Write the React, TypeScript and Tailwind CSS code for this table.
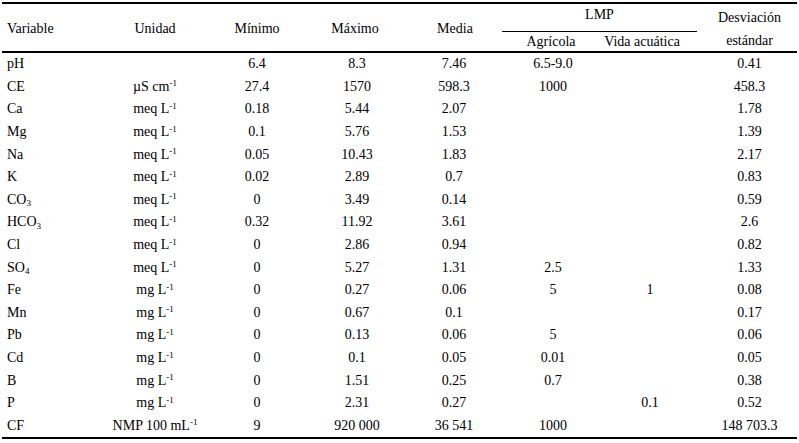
import React from "react";

type Row = {
  variable: React.ReactNode;
  unit: React.ReactNode;
  min: string;
  max: string;
  mean: string;
  agri?: string;
  aqua?: string;
  sd: string;
};

const meq = (
  <>
    meq L<sup className="text-[9px]">-1</sup>
  </>
);
const mg = (
  <>
    mg L<sup className="text-[9px]">-1</sup>
  </>
);

const rows: Row[] = [
  { variable: "pH", unit: "", min: "6.4", max: "8.3", mean: "7.46", agri: "6.5-9.0", sd: "0.41" },
  {
    variable: "CE",
    unit: (
      <>
        µS cm<sup className="text-[9px]">-1</sup>
      </>
    ),
    min: "27.4",
    max: "1570",
    mean: "598.3",
    agri: "1000",
    sd: "458.3",
  },
  { variable: "Ca", unit: meq, min: "0.18", max: "5.44", mean: "2.07", sd: "1.78" },
  { variable: "Mg", unit: meq, min: "0.1", max: "5.76", mean: "1.53", sd: "1.39" },
  { variable: "Na", unit: meq, min: "0.05", max: "10.43", mean: "1.83", sd: "2.17" },
  { variable: "K", unit: meq, min: "0.02", max: "2.89", mean: "0.7", sd: "0.83" },
  {
    variable: (
      <>
        CO<sub className="text-[9px]">3</sub>
      </>
    ),
    unit: meq,
    min: "0",
    max: "3.49",
    mean: "0.14",
    sd: "0.59",
  },
  {
    variable: (
      <>
        HCO<sub className="text-[9px]">3</sub>
      </>
    ),
    unit: meq,
    min: "0.32",
    max: "11.92",
    mean: "3.61",
    sd: "2.6",
  },
  { variable: "Cl", unit: meq, min: "0", max: "2.86", mean: "0.94", sd: "0.82" },
  {
    variable: (
      <>
        SO<sub className="text-[9px]">4</sub>
      </>
    ),
    unit: meq,
    min: "0",
    max: "5.27",
    mean: "1.31",
    agri: "2.5",
    sd: "1.33",
  },
  { variable: "Fe", unit: mg, min: "0", max: "0.27", mean: "0.06", agri: "5", aqua: "1", sd: "0.08" },
  { variable: "Mn", unit: mg, min: "0", max: "0.67", mean: "0.1", sd: "0.17" },
  { variable: "Pb", unit: mg, min: "0", max: "0.13", mean: "0.06", agri: "5", sd: "0.06" },
  { variable: "Cd", unit: mg, min: "0", max: "0.1", mean: "0.05", agri: "0.01", sd: "0.05" },
  { variable: "B", unit: mg, min: "0", max: "1.51", mean: "0.25", agri: "0.7", sd: "0.38" },
  { variable: "P", unit: mg, min: "0", max: "2.31", mean: "0.27", aqua: "0.1", sd: "0.52" },
  {
    variable: "CF",
    unit: (
      <>
        NMP 100 mL<sup className="text-[9px]">-1</sup>
      </>
    ),
    min: "9",
    max: "920 000",
    mean: "36 541",
    agri: "1000",
    sd: "148 703.3",
  },
];

const cols = "grid grid-cols-[108px_90px_114px_86px_108px_90px_104px_95px]";

export default function App() {
  return (
    <div className="w-[799px] h-[443px] bg-white text-black overflow-hidden pt-[2px]">
      <div
        className="ml-[2px] w-[795px] text-[14px] leading-none"
        style={{ fontFamily: '"Liberation Serif", "Times New Roman", serif' }}
      >
        {/* Header */}
        <div className={`${cols} grid-rows-[28px_19px] border-t-2 border-b-2 border-black`}>
          <div className="row-span-2 flex items-center pl-[5px] pt-[3px]">Variable</div>
          <div className="row-span-2 flex items-center justify-center pt-[3px]">Unidad</div>
          <div className="row-span-2 flex items-center justify-center pt-[3px]">Mínimo</div>
          <div className="row-span-2 flex items-center justify-center pt-[3px] pr-[4px]">Máximo</div>
          <div className="row-span-2 flex items-center justify-center pt-[3px] pl-[2px]">Media</div>
          <div className="col-span-2 -ml-[6px] mr-[5px] flex items-end">
            <div className="w-full border-b border-black text-center pb-[9px]">LMP</div>
          </div>
          <div className="row-span-2 col-start-8 row-start-1 flex flex-col items-center justify-center gap-[9px] pt-[3px]">
            <span>Desviación</span>
            <span>estándar</span>
          </div>
          <div className="col-start-6 row-start-2 flex items-center justify-center pr-[4px] pt-[1px]">
            Agrícola
          </div>
          <div className="col-start-7 row-start-2 flex items-center justify-center pr-[16px] pt-[1px]">
            Vida acuática
          </div>
        </div>

        {/* Body */}
        <div className="border-b-2 border-black">
          {rows.map((r, i) => (
            <div key={i} className={`${cols} h-[22.6px] items-center`}>
              <div className="pl-[5px]">{r.variable}</div>
              <div className="text-center">{r.unit}</div>
              <div className="text-center">{r.min}</div>
              <div className="text-center">{r.max}</div>
              <div className="text-center">{r.mean}</div>
              <div className="text-center">{r.agri ?? ""}</div>
              <div className="text-center">{r.aqua ?? ""}</div>
              <div className="text-center">{r.sd}</div>
            </div>
          ))}
        </div>
      </div>
    </div>
  );
}
